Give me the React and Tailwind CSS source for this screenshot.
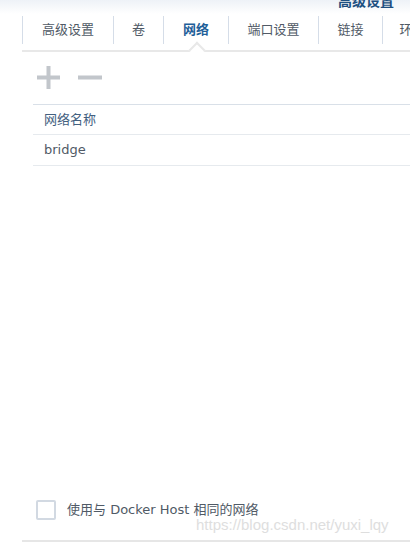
const tabs = [
  { label: "高级设置", w: "w-[91px]" },
  { label: "卷", w: "w-[50px]" },
  { label: "网络", w: "w-[65px]", active: true },
  { label: "端口设置", w: "w-[90px]" },
  { label: "链接", w: "w-[64px]" },
  { label: "环境", w: "w-[60px]" },
];

const font = { fontFamily: '"DejaVu Sans", "Noto Sans CJK SC", sans-serif' };

function PlusIcon() {
  return (
    <svg width="23" height="23" viewBox="0 0 23 23">
      <rect x="0" y="9.5" width="23" height="4" fill="#c2c6cb" />
      <rect x="9.5" y="0" width="4" height="23" fill="#c2c6cb" />
    </svg>
  );
}

function MinusIcon() {
  return (
    <svg width="24" height="23" viewBox="0 0 24 23">
      <rect x="0" y="9.5" width="24" height="4" fill="#c2c6cb" />
    </svg>
  );
}

export default function App() {
  return (
    <div className="w-[410px] h-[545px] bg-white overflow-hidden flex flex-col" style={font}>
      <div className="h-[14px] bg-gradient-to-b from-[#eef2f7] to-white relative shrink-0">
        <span className="absolute right-[16px] top-[-9px] text-[14px] font-bold text-[#1d4f80]">高级设置</span>
      </div>
      <div className="relative ml-[22px] shrink-0">
        <div className="flex h-[28px] mt-[2px] overflow-hidden">
          {tabs.map((t) => (
            <div
              key={t.label}
              className={`${t.w} shrink-0 border-l border-[#d5dde8] flex items-center justify-center text-[13px] ${
                t.active ? "font-bold text-[#1f5f99]" : "text-[#505a66]"
              }`}
            >
              {t.label}
            </div>
          ))}
        </div>
        <div className="h-[6px]" />
        <div className="h-[2px] bg-[#e8e8e8]" />
        <div className="absolute left-[169px] top-[30px] w-[12px] h-[12px] rotate-45 bg-white border-l-2 border-t-2 border-[#e8e8e8]" />
      </div>

      <div className="flex items-center gap-[18px] ml-[37px] mt-[14px] h-[23px]">
        <PlusIcon />
        <MinusIcon />
      </div>

      <div className="ml-[33px] mt-[15px] border-t border-[#d9e0e8]">
        <div className="h-[30px] flex items-center pl-[11px] text-[13px] text-[#43607f] border-b border-[#e6eaee]">
          网络名称
        </div>
        <div className="h-[31px] flex items-center pl-[11px] text-[13px] text-[#505a66] border-b border-[#e6eaee]">
          bridge
        </div>
      </div>

      <div className="flex-1" />

      <div className="flex items-center ml-[36px] mb-[10px] gap-[11px]">
        <div className="w-[20px] h-[20px] border-2 border-[#d2d9e2] rounded-[2px] bg-white" />
        <span className="text-[13px] text-[#505a66]">使用与 Docker Host 相同的网络</span>
      </div>
      <div className="relative h-[10px]">
        <span
          className="absolute left-[196px] top-[-16px] text-[15px] text-[#dedede]"
          style={{ fontFamily: '"Liberation Sans", Arial, sans-serif' }}
        >
          https://blog.csdn.net/yuxi_lqy
        </span>
      </div>
      <div className="ml-[22px] h-[2px] bg-[#e6e6e6] mb-[3px]" />
    </div>
  );
}
